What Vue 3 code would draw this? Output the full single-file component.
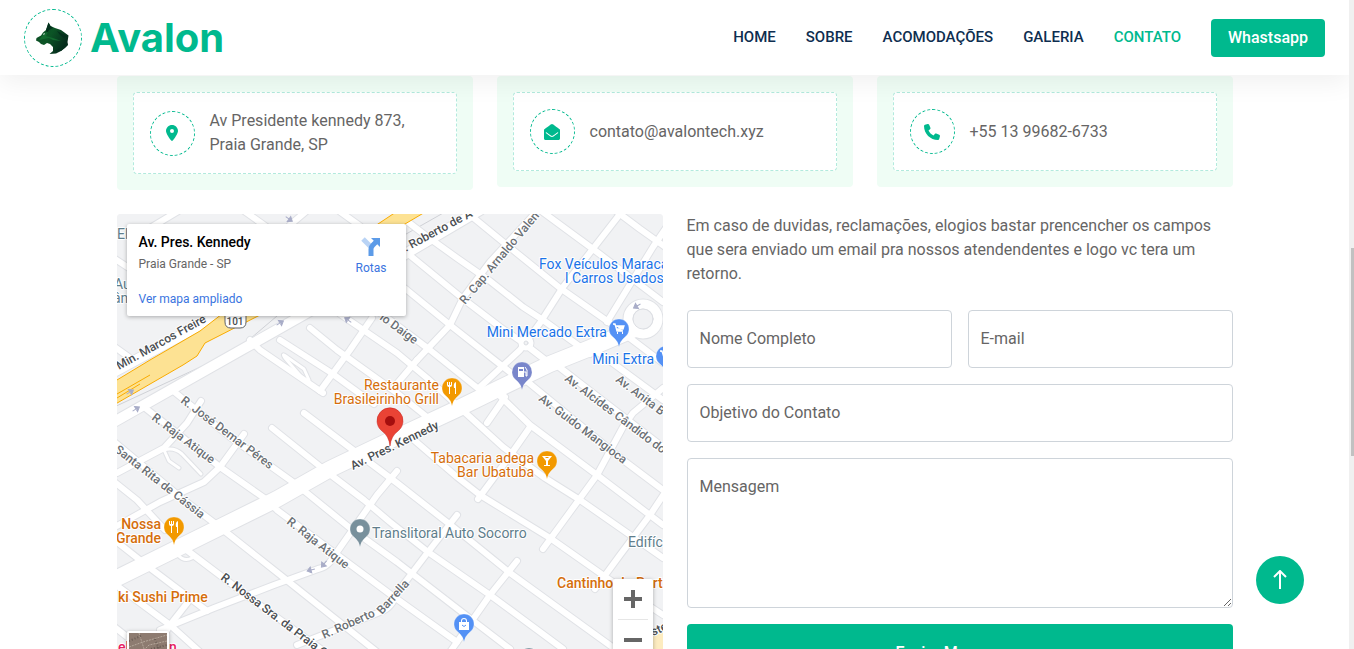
<script setup>
const links = [
  { text: 'HOME' }, { text: 'SOBRE' }, { text: 'ACOMODAÇÕES' }, { text: 'GALERIA' }, { text: 'CONTATO', active: true },
]

const contacts = [
  { id: 'pin', text: 'Av Presidente kennedy 873, Praia Grande, SP', box: '0 0 384 512', d: 'M215.700 499.200C267 435 384 279.400 384 192C384 86 298 0 192 0S0 86 0 192c0 87.400 117 243 168.300 307.200c12.300 15.300 35.100 15.300 47.400 0zM192 128a64 64 0 1 1 0 128a64 64 0 1 1 0-128z' },
  { id: 'mail', text: 'contato@avalontech.xyz', box: '0 0 512 512', d: 'M512 464c0 26.500-21.500 48-48 48H48c-26.500 0-48-21.500-48-48V200.700c0-14.900 6.900-28.900 18.600-38C43 142.700 64 126.200 185.500 38C202.300 25.800 235.700-.400 256 0c20.300-.400 53.700 25.800 70.500 38c121.500 88.200 142.500 104.700 166.900 124.700c11.700 9.100 18.600 23.100 18.600 38V464zm-65.700-196.600c-2.600-3.600-7.700-4.400-11.300-1.700c-22.900 16.600-55.500 40.200-108.500 78.700c-16.900 12.300-50.200 38.400-70.500 38c-20.300.400-53.700-25.800-70.500-38c-53-38.500-85.600-62.100-108.500-78.700c-3.600-2.600-8.700-1.900-11.300 1.700l-9.100 13.200c-2.400 3.600-1.600 8.500 1.900 11c22.900 16.600 55.400 40.200 108.300 78.600c21.500 15.700 56.200 46.100 88.700 45.800c32.500.300 67.200-30.100 88.700-45.800c52.900-38.400 85.400-62 108.300-78.600c3.500-2.600 4.400-7.400 1.900-11z' },
  { id: 'phone', text: '+55 13 99682-6733', box: '0 0 512 512', d: 'M164.900 24.600c-7.700-18.600-28-28.500-47.400-23.200l-88 24C12.100 30.200 0 46 0 64c0 247.400 200.600 448 448 448c18 0 33.800-12.100 38.600-29.500l24-88c5.300-19.400-4.600-39.700-23.200-47.400l-96-40c-16.300-6.800-35.200-2.100-46.300 11.600L304.700 368C234.300 334.700 177.300 277.700 144 207.300L193.300 167c13.700-11.200 18.400-30 11.600-46.300l-40-96z' },
]

const roads = [
  'M525 200L540 210L597 252L663 302', 'M464 210L513 250L560 288L610 323L663 363',
  'M395 212L425 235L457 258L490 281L523 307L543 320L590 354', 'M390 240L407 253L462 298L500 327L522 342L548 362',
  'M370 263L407 290L450 325L497 362L520 380', 'M350 292L390 320L430 350L480 390',
  'M340 314L397 353L427 378L470 417L503 447L545 478L580 500L623 530L663 558',
  'M417 360L450 325L463 298L490 262L540 208', 'M480 387L520 350L540 323L563 287L592 250L620 214',
  'M607 322L653 247L668 225', 'M612 208L640 229L668 249', 'M417 360L395 386',
  'M144 407L220 467L267 500L277 510L390 594L457 642', 'M172 390L230 437L297 485L350 528L397 562L463 613L510 649',
  'M201 401L187 423L164 448L117 473', 'M244 434L220 467L204 482L160 502L117 526',
  'M272 428L327 472L364 500L390 522L428 552L490 595L563 649', 'M304 413L357 453L397 483L457 530L510 573L615 649',
  'M400 428L457 477L480 495L550 538L607 578L663 615', 'M497 393L530 425L597 475L630 500L663 525',
  'M523 378L623 460L663 490', 'M550 360L663 447', 'M595 350L663 400',
  'M663 388L633 413L623 427L597 475L570 512L543 549', 'M478 499L507 460L530 427', 'M487 423L505 397',
  'M397 471L377 495L344 542L330 562Q326 567 318 569L274 585L214 608L160 630', 'M457 515L428 552L397 593Q392 608 380 612L330 632L297 645',
  'M517 561L490 595L450 652', 'M668 488L650 515L620 555L595 589',
  'M112 538L150 568L207 611', 'M112 582L170 625L200 652', 'M184 548L250 598L325 652',
  'M112 440L184 500L217 525L284 578L377 652', 'M112 480L137 500L165 530', 'M188 602L170 625L152 655', 'M112 625L150 655',
  'M250 340L260 350L304 380L323 393', 'M280 340L330 372L374 404', 'M310 328L337 350L397 393L427 417', 'M320 391L350 350L372 318',
  'M112 257L135 272', 'M180 210L150 228', 'M240 208L268 228', 'M310 208L290 225', 'M112 345L130 358',
  'M335 208L360 226',
]
const alleys = ['M304 380L285 358Q281 352 287 357L304 369L309 380', 'M164 450Q174 447 182 454L201 474', 'M164 450L169 461L179 468', 'M178 555Q184 562 192 558']

const pins = [
  { x: 619, y: 329, c: '#5491f5', k: 'cart' }, { x: 666, y: 356, c: '#5491f5', k: 'cart' }, { x: 464, y: 624, c: '#5491f5', k: 'bag' },
  { x: 522, y: 372, c: '#7986cb', k: 'fuel' }, { x: 452, y: 388, c: '#f29900', k: 'food' }, { x: 174, y: 527, c: '#f29900', k: 'food' },
  { x: 547, y: 461, c: '#f29900', k: 'bar' }, { x: 360, y: 529, c: '#78909c', k: 'dot' }, { x: 529, y: 658, c: '#78909c', k: 'dot' },
]

const streets = [
  { x: 119, y: 370, r: -29, t: 'Min. Marcos Freire', dark: true }, { x: 396, y: 257, r: -28, t: 'Dr. Roberto de A', dark: true },
  { x: 465, y: 305, r: -50, t: 'R. Cap. Arnaldo Valen' }, { x: 379, y: 319, r: 36, t: 'io Daige' },
  { x: 180, y: 402, r: 37, t: 'R. José Demar Péres' }, { x: 151, y: 419, r: 37, t: 'R. Raja Atique' },
  { x: 114, y: 451, r: 38, t: 'Santa Rita de Cássia' }, { x: 353, y: 470, r: -26, t: 'Av. Pres. Kennedy', dark: true },
  { x: 538, y: 400, r: 37, t: 'Av. Guido Mangioca' }, { x: 564, y: 380, r: 37, t: 'Av. Alcídes Cândido do' }, { x: 615, y: 381, r: 37, t: 'Av. Anita B' },
  { x: 286, y: 523, r: 38, t: 'R. Raja Atique' }, { x: 220, y: 579, r: 37, t: 'R. Nossa Sra. da Praia G', dark: true },
  { x: 324, y: 639, r: -24, t: 'R. Roberto' }, { x: 382, y: 615, r: -48, t: 'Barrella' }, { x: 653, y: 636, r: -24, t: 'ste', dark: true },
]

const places = [
  { x: 539, y: 269, t: 'Fox Veículos Maraca', k: 'shop' }, { x: 565, y: 283, t: 'l Carros Usados', k: 'shop' },
  { x: 607, y: 337, t: 'Mini Mercado Extra', k: 'shop', end: true }, { x: 654, y: 364, t: 'Mini Extra', k: 'shop', end: true },
  { x: 439, y: 390, t: 'Restaurante', k: 'eat', end: true }, { x: 439, y: 404, t: 'Brasileirinho Grill', k: 'eat', end: true },
  { x: 534, y: 463, t: 'Tabacaria adega', k: 'eat', end: true }, { x: 534, y: 477, t: 'Bar Ubatuba', k: 'eat', end: true },
  { x: 161, y: 529, t: 'Nossa', k: 'eat bold', end: true }, { x: 161, y: 543, t: 'Grande', k: 'eat bold', end: true },
  { x: 118, y: 602, t: 'ki Sushi Prime', k: 'eat bold' }, { x: 557, y: 588, t: 'Cantinho do Port', k: 'eat bold' },
  { x: 372, y: 538, t: 'Translitoral Auto Socorro', k: 'misc' }, { x: 628, y: 547, t: 'Edifíc', k: 'misc' },
  { x: 117, y: 239, t: 'El', k: 'misc' }, { x: 114, y: 289, t: 'Au', k: 'misc' }, { x: 113, y: 303, t: 'ân', k: 'misc' },
  { x: 118, y: 652, t: 'el', k: 'hotel' }, { x: 169, y: 652, t: 'n', k: 'hotel' },
]
const arrows = [{ x: 289, y: 219, r: 35 }, { x: 280, y: 323, r: -32 }, { x: 348, y: 320, r: 215 }, { x: 136, y: 409, r: -32 }, { x: 130, y: 392, r: -32 }, { x: 637, y: 306, r: 150 }, { x: 324, y: 564, r: 130 }, { x: 311, y: 570, r: 165 }]
</script>

<template>
  <div class="page">
    <header class="navbar">
      <a href="#" class="brand">
        <span class="brand-mark">
          <svg viewBox="0 0 40 40" width="40" height="40" aria-hidden="true">
            <defs>
              <linearGradient id="fur" x1="0" y1="0" x2="1" y2="0.6">
                <stop offset="0" stop-color="#0b4a24" /><stop offset="0.5" stop-color="#0c5526" /><stop offset="1" stop-color="#05291c" />
              </linearGradient>
            </defs>
            <path fill="url(#fur)" d="M15.500 4.500L17.500 8L22 10L28 12L35.500 17.500L34.500 24L35 27L32 30L28 33L23 35.500L16.500 36L20 33L20 29L17 26L14 25L11 27L8 26L6 24L3 22.500L3.500 20L8 17.500L10 14.500L13 12Z" />
            <path fill="#04301d" d="M15.500 4.500L17.500 8L20 10L16 12L14 15L13 12Z M21 33L28 30L34 25L34.500 27L28 33Z M24 13L34 18L31 20L27 17Z" />
            <path fill="#136b30" d="M11 15L15 14L13 18L20 20L28 23L20 22L16 20L6 22L9 18Z" />
            <path fill="#fff" d="M10 16L12 15L11 17Z" />
          </svg>
        </span>
        <h1>Avalon</h1>
      </a>
      <nav class="menu">
        <a v-for="l in links" :key="l.text" href="#" :class="{ active: l.active }">{{ l.text }}</a>
        <a href="#" class="cta">Whastsapp</a>
      </nav>
    </header>

    <main class="container">
      <section class="contacts">
        <div v-for="c in contacts" :key="c.id" class="contact">
          <div class="contact-inner">
            <span class="contact-icon"><svg :viewBox="c.box" height="16" aria-hidden="true"><path :d="c.d" fill="currentColor" /></svg></span>
            <span>{{ c.text }}</span>
          </div>
        </div>
      </section>

      <section class="columns">
        <div class="map">
          <svg class="map-art" viewBox="117 214 546 468" preserveAspectRatio="xMinYMin slice" aria-hidden="true">
            <rect x="117" y="214" width="546" height="468" fill="#f1f2f4" />
            <g fill="none" stroke-linecap="round" stroke-linejoin="round">
              <path d="M112 408L237 350L277 316M385 246L445 212" stroke="#cfd1d6" />
              <g stroke="#e0e2e6">
                <path v-for="(d, i) in roads" :key="i" :d="d" stroke-width="8" />
                <path v-for="(d, i) in alleys" :key="'a' + i" :d="d" stroke-width="5" />
                <circle cx="643" cy="319" r="15" stroke-width="11" />
                <circle cx="526" cy="343" r="5" stroke-width="7" />
                <path d="M112 423L243 349L312 310L407 253L480 210M112 373L215 317" stroke-width="12" />
                <path d="M105 584L184 545L277 499L330 469L397 437L457 409L500 388L550 364L590 348L635 329" stroke-width="18" />
              </g>
              <g stroke="#fff">
                <path v-for="(d, i) in roads" :key="i" :d="d" stroke-width="6" />
                <path v-for="(d, i) in alleys" :key="'a' + i" :d="d" stroke-width="3" />
                <circle cx="643" cy="319" r="15" stroke-width="9" />
                <circle cx="526" cy="343" r="5" stroke-width="5" />
                <path d="M112 423L243 349L312 310L407 253L480 210M112 373L215 317" stroke-width="10" />
                <path d="M105 584L184 545L277 499L330 469L397 437L457 409L500 388L550 364L590 348L635 329" stroke-width="16" />
              </g>
              <circle cx="643" cy="319" r="10" fill="#f1f2f4" stroke="#dcdee3" />
              <circle cx="526" cy="343" r="2" fill="#f1f2f4" stroke="#dcdee3" />
            </g>
            <path d="M112 383L150 360L200 331L222 314L262 314L205 343L197 356L183 365L112 406ZM360 236L390 216L402 208H432L405 224L388 233Z" fill="#fde293" stroke="#f9ab00" />
            <path d="M117 394L150 375M117 398L140 384" stroke="#f9ab00" fill="none" />
            <path d="M648 655L653 636L663 632V655Z" fill="#fdecc0" />
            <g v-for="(a, i) in arrows" :key="i" :transform="`translate(${a.x} ${a.y}) rotate(${a.r})`">
              <path d="M-4 0H2M0 -3L4 0L0 3Z" stroke="#a9adc8" stroke-width="1" fill="#a9adc8" />
            </g>
            <path d="M225 312H246V322Q246 328 240 328H231Q225 328 225 322Z" fill="#fff" stroke="#5f6368" />
            <text x="235" y="325" text-anchor="middle" class="shield">101</text>
            <text v-for="s in streets" :key="s.t + s.x" :class="['street', { dark: s.dark }]" :transform="`translate(${s.x} ${s.y}) rotate(${s.r})`">{{ s.t }}</text>
            <text v-for="p in places" :key="p.t" :x="p.x" :y="p.y" :class="['place', p.k]" :text-anchor="p.end ? 'end' : 'start'">{{ p.t }}</text>
            <g v-for="p in pins" :key="p.x" :transform="`translate(${p.x} ${p.y})`">
              <path d="M0 18Q-1 12 -6 8A10 10 0 1 1 6 8Q1 12 0 18Z" :fill="p.c" stroke="#fff" stroke-opacity="0.5" stroke-width="0.500" />
              <path v-if="p.k === 'cart'" d="M-6 -5H-4L-2 2H4M-3 -3H5L4 0H-2" fill="#fff" stroke="#fff" stroke-width="1.300" />
              <path v-if="p.k === 'cart'" d="M-2 4h1M3 4h1" stroke="#fff" stroke-width="2" />
              <template v-else-if="p.k === 'bag'">
                <path d="M-5 -2H5V6H-5ZM-3 -2V-3A3 3 0 0 1 3 -3V-2H2V-3A2 2 0 0 0 -2 -3V-2Z" fill="#fff" /><path d="M-2 1Q0 4 2 1" stroke="#5491f5" fill="none" />
              </template>
              <template v-else-if="p.k === 'fuel'">
                <path d="M-4 -5H2V5H-4Z" fill="#fff" /><path d="M-3 -3H1V-1H-3Z" fill="#7986cb" /><path d="M2 0H4V4H5V-2L3 -5" fill="none" stroke="#fff" />
              </template>
              <path v-else-if="p.k === 'food'" d="M-5 -6V-3Q-5 -1 -3 -1V6H-2V-1Q0 -1 0 -3V-6H-1V-3H-2V-6H-3V-3H-4V-6ZM4 -6Q1 -5 2 0H3V6H4Z" fill="#fff" />
              <path v-else-if="p.k === 'bar'" d="M-5 -5H5L1 0V4H3V5H-3V4H-1V0ZM-2 -4L-1 -3H1L2 -4Z" fill="#fff" fill-rule="evenodd" />
              <circle v-else-if="p.k === 'dot'" r="3.500" fill="#fff" />
            </g>
            <path d="M390 446Q389 436 382 431A13 13 0 1 1 398 431Q391 436 390 446Z" fill="#ea4335" stroke="#c5221f" stroke-width="0.500" />
            <circle cx="390" cy="421" r="5" fill="#a50e0e" />
          </svg>

          <div class="map-card">
            <div class="map-info">
              <strong>Av. Pres. Kennedy</strong>
              <span>Praia Grande - SP</span>
              <a href="#">Ver mapa ampliado</a>
            </div>
            <a href="#" class="routes">
              <svg width="22" height="22" viewBox="0 0 22 22" aria-hidden="true">
                <path d="M3 3L11 11" stroke="#b9d3f5" stroke-width="5" /><path d="M11 20V13Q11 11 13 9L16 6" stroke="#5c9be8" stroke-width="5" fill="none" /><path d="M11 2H20V11Z" fill="#5c9be8" />
              </svg>
              Rotas
            </a>
          </div>
          <button class="satellite" type="button" aria-label="Satélite">
            <svg width="38" height="38" viewBox="0 0 38 38" aria-hidden="true">
              <rect width="38" height="38" fill="#8d7b70" />
              <path d="M0 14L14 9L38 2M2 30L20 12L38 8M10 0L22 38M0 22L38 18" stroke="#b5a79a" stroke-width="1" fill="none" stroke-dasharray="2 1" />
              <path d="M0 8L12 3M22 16L38 12M4 20L18 18M26 6L34 26M0 34L38 30" stroke="#665a52" stroke-width="2" fill="none" stroke-dasharray="1 2" />
            </svg>
          </button>
          <div class="zoom">
            <button type="button" aria-label="Aumentar o zoom"><svg width="18" height="18" aria-hidden="true"><path d="M0 9H18M9 0V18" stroke="#666" stroke-width="4" /></svg></button>
            <hr>
            <button type="button" aria-label="Diminuir o zoom"><svg width="18" height="18" aria-hidden="true"><path d="M0 9H18" stroke="#666" stroke-width="4" /></svg></button>
          </div>
        </div>

        <div>
          <p>Em caso de duvidas, reclamações, elogios bastar prencencher os campos que sera enviado um email pra nossos atendendentes e logo vc tera um retorno.</p>
          <form class="form" @submit.prevent>
            <div class="field"><input id="name" type="text"><label for="name">Nome Completo</label></div>
            <div class="field"><input id="email" type="email"><label for="email">E-mail</label></div>
            <div class="field wide"><input id="subject" type="text"><label for="subject">Objetivo do Contato</label></div>
            <div class="field wide"><textarea id="message"></textarea><label for="message">Mensagem</label></div>
            <button class="send wide" type="submit">Enviar Mensagem</button>
          </form>
        </div>
      </section>
    </main>

    <a href="#" class="to-top" aria-label="Voltar ao topo">
      <svg width="14" height="20" viewBox="0 0 14 20" aria-hidden="true"><path d="M7 19V2M1 7L7 1L13 7" fill="none" stroke="#fff" stroke-width="2" /></svg>
    </a>
    <div class="scroll-track"><div class="scroll-thumb"></div></div>
  </div>
</template>

<style>
html, body { overflow: hidden; }
</style>

<style scoped>
* { box-sizing: border-box; }
.page { height: 100vh; overflow: hidden; padding-right: 5px; background: #fff; color: #666565; font: 400 16px/24px Roboto, sans-serif; }
a { text-decoration: none; }
button { font: inherit; border: 0; cursor: pointer; }
.navbar { position: relative; z-index: 2; display: flex; align-items: center; justify-content: space-between; height: 75px; padding: 0 24px; background: #fff; box-shadow: 0 8px 24px rgba(0, 0, 0, 0.06); }
.brand { display: flex; align-items: center; gap: 8px; }
.brand-mark { display: flex; align-items: center; justify-content: center; width: 58px; height: 58px; border: 1px dashed #00b98e; border-radius: 50%; }
.brand h1 { margin: 0; color: #00b98e; font: 700 40px/48px Inter, sans-serif; }
.menu { display: flex; align-items: center; gap: 30px; color: #0e2e50; font-size: 15px; font-weight: 500; }
.menu a { padding-bottom: 1px; color: inherit; }
.menu .active { color: #00b98e; }
.menu .cta { padding: 7px 17px; border-radius: 4px; background: #00b98e; color: #fff; font-size: 16px; }
.container { max-width: 1140px; margin: 0 auto; padding: 1px 12px 0; }
.contacts { display: grid; grid-template-columns: repeat(3, 1fr); align-items: start; gap: 24px; }
.contact { padding: 16px; border-radius: 4px; background: #effdf5; }
.contact-inner { display: flex; align-items: center; padding: 16px; border: 1px dashed rgba(0, 185, 142, 0.3); border-radius: 4px; background: #fff; }
.contact-icon { display: flex; flex-shrink: 0; align-items: center; justify-content: center; width: 45px; height: 45px; margin-right: 15px; border: 1px dashed #00b98e; border-radius: 50%; color: #00b98e; }
.columns { display: grid; grid-template-columns: 1fr 1fr; gap: 24px; margin-top: 24px; }
.map { position: relative; overflow: hidden; min-height: 400px; border-radius: 4px; background: #f1f2f4; }
.map-art { position: absolute; inset: 0; width: 100%; height: 100%; }
.map-art text { paint-order: stroke; stroke: #fff; stroke-width: 2px; stroke-linejoin: round; }
.street { fill: #6b7075; font-size: 12px; font-weight: 500; }
.street.dark { fill: #4a4e52; }
.place { font-size: 14px; }
.bold { font-weight: 500; }
.shop { fill: #1a73e8; }
.eat { fill: #d56e0c; }
.misc { fill: #607d8b; }
.hotel { fill: #e91e63; font-weight: 500; }
.shield { fill: #4a4e52; font-size: 10px; font-weight: 500; }
.map-card { position: absolute; top: 10px; left: 10px; display: flex; justify-content: space-between; width: 279px; padding: 8px 19px 9px 12px; border-radius: 2px; background: #fff; box-shadow: 0 1px 4px rgba(0, 0, 0, 0.3); font-size: 12px; line-height: 16px; }
.map-info { display: flex; flex-direction: column; }
.map-info strong { color: #000; font-size: 14px; font-weight: 500; line-height: 20px; }
.map-info span { margin-top: 4px; }
.map-info a { margin-top: 19px; }
.map-card a { color: #3a74e0; }
.routes { display: flex; flex-direction: column; align-items: center; gap: 1px; padding-top: 4px; line-height: 18px; }
.satellite { position: absolute; bottom: 9px; left: 10px; padding: 2px; border-radius: 2px; background: #fff; box-shadow: 0 1px 4px rgba(0, 0, 0, 0.3); }
.satellite svg { display: block; }
.zoom { position: absolute; right: 10px; bottom: 22px; width: 40px; border-radius: 2px; background: #fff; box-shadow: 0 1px 4px rgba(0, 0, 0, 0.3); }
.zoom button { display: flex; align-items: center; justify-content: center; width: 40px; height: 40px; padding: 0; background: none; }
.zoom hr { height: 1px; margin: 0 5px; border: 0; background: #e6e6e6; }
p { margin: 0 0 24px; }
.form { display: grid; grid-template-columns: 1fr 1fr; gap: 16px; }
.wide { grid-column: 1 / -1; }
.field { position: relative; display: flex; }
.field input, .field textarea { width: 100%; height: 58px; padding: 16px 12px; border: 1px solid #ced4da; border-radius: 4px; background: #fff; color: #666565; font: inherit; }
.field textarea { height: 150px; resize: vertical; }
.field label { position: absolute; top: 17px; left: 13px; pointer-events: none; }
.send { padding: 17px 16px; border-radius: 4px; background: #00b98e; color: #fff; font-weight: 500; }
.to-top { position: fixed; right: 50px; bottom: 45px; z-index: 3; display: flex; align-items: center; justify-content: center; width: 48px; height: 48px; border-radius: 50%; background: #00b98e; }
.scroll-track { position: fixed; top: 0; right: 0; bottom: 0; z-index: 4; width: 5px; padding-left: 2px; background: #f0f0f0; }
.scroll-thumb { height: 32%; margin-top: 248px; background: #c1c1c1; }
</style>
